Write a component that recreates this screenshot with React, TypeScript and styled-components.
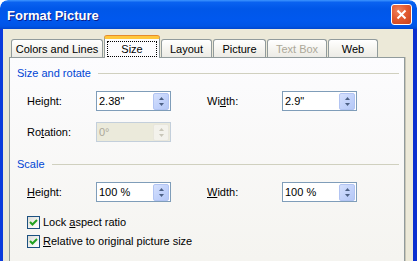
import styled, { createGlobalStyle } from "styled-components";

const GlobalStyle = createGlobalStyle`
  html, body {
    margin: 0;
    padding: 0;
    background: #ffffff;
  }
  body {
    font-family: "Liberation Sans", Arial, sans-serif;
    font-size: 11px;
    color: #000;
  }
`;

const tabs = [
  { label: "Colors and Lines", width: 92 },
  { label: "Size", width: 56, active: true },
  { label: "Layout", width: 51 },
  { label: "Picture", width: 53 },
  { label: "Text Box", width: 60, disabled: true },
  { label: "Web", width: 50 },
];

const Window = styled.div`
  width: 417px;
  height: 261px;
  display: flex;
  flex-direction: column;
  overflow: hidden;
  border-radius: 8px 8px 0 0;
`;

const TitleBar = styled.div`
  flex: none;
  height: 29px;
  display: flex;
  align-items: center;
  padding: 0 5px 0 7px;
  border-radius: 8px 8px 0 0;
  background: linear-gradient(
    180deg,
    #3d95ff 0%,
    #0a62f0 8%,
    #0057e9 30%,
    #0058ee 70%,
    #0055e6 90%,
    #0046cf 100%
  );
`;

const Title = styled.span`
  flex: 1;
  font-family: "Liberation Sans", Arial, sans-serif;
  font-weight: bold;
  font-size: 13px;
  color: #fff;
  text-shadow: 1px 1px 0 #0a1e8a;
  padding-top: 1px;
`;

const CloseButton = styled.div`
  width: 21px;
  height: 21px;
  box-sizing: border-box;
  border: 1px solid #fff;
  border-radius: 3px;
  background: radial-gradient(circle at 35% 30%, #f0835e 0%, #e25a30 45%, #c8401a 100%);
  display: grid;
  place-items: center;
`;

const Body = styled.div`
  flex: 1;
  display: flex;
  flex-direction: column;
  background: #ece9d8;
  border-left: 3px solid #0b3bdc;
  border-right: 4px solid #0a2fd0;
  padding: 7px 8px 0 6px;
`;

const TabRow = styled.div`
  display: flex;
  align-items: flex-end;
  gap: 1px;
  height: 21px;
  margin-left: 2px;
  position: relative;
  z-index: 1;
`;

const Tab = styled.div<{ $width: number; $active?: boolean; $disabled?: boolean }>`
  box-sizing: border-box;
  width: ${(p) => p.$width}px;
  height: ${(p) => (p.$active ? 22 : 18)}px;
  margin-bottom: ${(p) => (p.$active ? -1 : 0)}px;
  display: flex;
  align-items: center;
  justify-content: center;
  border: 1px solid #919b9c;
  border-bottom: none;
  border-radius: 3px 3px 0 0;
  color: ${(p) => (p.$disabled ? "#aca899" : "#000")};
  background: ${(p) =>
    p.$active ? "#fcfcfe" : "linear-gradient(180deg, #ffffff 0%, #f4f3ee 60%, #ecebe6 100%)"};
  ${(p) =>
    p.$active &&
    `
    border-top: 3px solid #ffc73c;
    box-shadow: 0 -1px 0 #e68b2c;
  `}
`;

const FocusLabel = styled.span`
  outline: 1px dotted #000;
  padding: 1px 13px 0;
  line-height: 13px;
`;

const Panel = styled.div`
  flex: none;
  height: 230px;
  box-sizing: border-box;
  border: 1px solid #919b9c;
  background: linear-gradient(180deg, #fcfcfe 0%, #f4f3ee 100%);
  box-shadow: 1px 0 0 #c9c6b6;
  padding: 8px 5px 0 7px;
  display: flex;
  flex-direction: column;
`;

const Section = styled.div<{ $top?: number }>`
  display: flex;
  flex-direction: column;
  gap: 11px;
  margin-top: ${(p) => p.$top ?? 0}px;
`;

const Header = styled.div`
  display: flex;
  align-items: center;
  gap: 7px;
  height: 14px;
  color: #0046d5;
`;

const HeaderLine = styled.div`
  flex: 1;
  height: 1px;
  background: #d0d0bf;
`;

const Row = styled.div`
  display: flex;
  align-items: center;
  padding-left: 10px;
  height: 20px;
`;

const Label = styled.span<{ $width: number }>`
  width: ${(p) => p.$width}px;
`;

const SpinBox = styled.div<{ $disabled?: boolean }>`
  box-sizing: border-box;
  width: 75px;
  height: 20px;
  border: 1px solid ${(p) => (p.$disabled ? "#c3cfdb" : "#7f9db9")};
  background: ${(p) => (p.$disabled ? "#ebeadb" : "#fff")};
  display: flex;
  align-items: center;
  padding: 0 1px 0 2px;
  margin-right: ${(p) => (p.$disabled ? 0 : 36)}px;
`;

const SpinValue = styled.span<{ $disabled?: boolean }>`
  flex: 1;
  color: ${(p) => (p.$disabled ? "#aca899" : "#000")};
`;

const SpinButton = styled.div<{ $disabled?: boolean }>`
  box-sizing: border-box;
  width: 16px;
  height: 17px;
  border: 1px solid ${(p) => (p.$disabled ? "#e8e6dc" : "#b2c4f2")};
  border-radius: 2px;
  background: ${(p) =>
    p.$disabled
      ? "#f3f2ec"
      : "linear-gradient(135deg, #d6e1fd 0%, #c3d3fb 50%, #b5c8f6 100%)"};
  display: flex;
  flex-direction: column;
  align-items: center;
  justify-content: center;
  gap: 3px;
`;

const Checks = styled.div`
  display: flex;
  flex-direction: column;
  gap: 3px;
  margin-top: 12px;
  padding-left: 10px;
`;

const CheckRow = styled.div`
  display: flex;
  align-items: center;
  gap: 3px;
  height: 16px;
`;

const CheckBox = styled.div`
  box-sizing: border-box;
  width: 13px;
  height: 13px;
  border: 1px solid #1c5180;
  background: linear-gradient(135deg, #dcdcd7 0%, #f4f4f1 60%, #ffffff 100%);
  display: grid;
  place-items: center;
`;

const Arrow = ({ up, disabled }: { up?: boolean; disabled?: boolean }) => (
  <svg width="5" height="3" viewBox="0 0 5 3">
    <polygon
      points={up ? "0,3 2.5,0 5,3" : "0,0 2.5,3 5,0"}
      fill={disabled ? "#c9c7ba" : "#4d6185"}
    />
  </svg>
);

const Spinner = ({ value, disabled }: { value: string; disabled?: boolean }) => (
  <SpinBox $disabled={disabled}>
    <SpinValue $disabled={disabled}>{value}</SpinValue>
    <SpinButton $disabled={disabled}>
      <Arrow up disabled={disabled} />
      <Arrow disabled={disabled} />
    </SpinButton>
  </SpinBox>
);

const Check = ({ children }: { children: React.ReactNode }) => (
  <CheckRow>
    <CheckBox>
      <svg width="9" height="9" viewBox="0 0 9 9">
        <path d="M1 4 L3.5 6.5 L8 2" stroke="#21a121" strokeWidth="2" fill="none" />
      </svg>
    </CheckBox>
    <span>{children}</span>
  </CheckRow>
);

export default function App() {
  return (
    <>
      <GlobalStyle />
      <Window>
        <TitleBar>
          <Title>Format Picture</Title>
          <CloseButton>
            <svg width="11" height="11" viewBox="0 0 11 11">
              <path d="M1.5 1.5 L9.5 9.5 M9.5 1.5 L1.5 9.5" stroke="#fff" strokeWidth="2" />
            </svg>
          </CloseButton>
        </TitleBar>
        <Body>
          <TabRow>
            {tabs.map((t) => (
              <Tab key={t.label} $width={t.width} $active={t.active} $disabled={t.disabled}>
                {t.active ? <FocusLabel>{t.label}</FocusLabel> : t.label}
              </Tab>
            ))}
          </TabRow>
          <Panel>
            <Section>
              <Header>
                Size and rotate
                <HeaderLine />
              </Header>
              <Row>
                <Label $width={69}>
                  Hei<u>g</u>ht:
                </Label>
                <Spinner value={'2.38"'} />
                <Label $width={75}>
                  Wi<u>d</u>th:
                </Label>
                <Spinner value={'2.9"'} />
              </Row>
              <Row>
                <Label $width={69}>
                  Ro<u>t</u>ation:
                </Label>
                <Spinner value="0°" disabled />
              </Row>
            </Section>
            <Section $top={15}>
              <Header>
                Scale
                <HeaderLine />
              </Header>
              <Row>
                <Label $width={69}>
                  <u>H</u>eight:
                </Label>
                <Spinner value="100 %" />
                <Label $width={75}>
                  <u>W</u>idth:
                </Label>
                <Spinner value="100 %" />
              </Row>
            </Section>
            <Checks>
              <Check>
                Lock <u>a</u>spect ratio
              </Check>
              <Check>
                <u>R</u>elative to original picture size
              </Check>
            </Checks>
          </Panel>
        </Body>
      </Window>
    </>
  );
}
